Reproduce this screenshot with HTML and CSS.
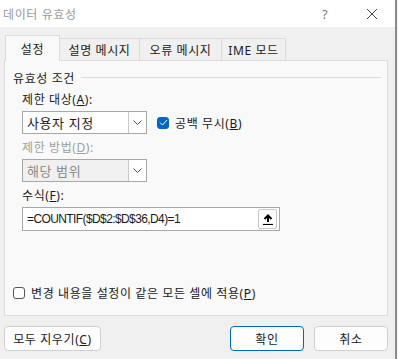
FILE: index.html
```html
<!DOCTYPE html>
<html lang="ko">
<head>
  <meta charset="UTF-8" />
  <title>데이터 유효성</title>
  <link rel="stylesheet" href="styles.css">
</head>
<body>

<div class="dialog">
  <div class="titlebar">
    <span class="title">데이터 유효성</span>
    <span class="help">?</span>
    <span class="close">
      <svg width="12" height="12" viewBox="0 0 12 12"><path d="M1 1 L11 11 M11 1 L1 11" stroke="#444" stroke-width="1" fill="none"/></svg>
    </span>
  </div>

  <div class="body">
    <div class="tabs">
      <div class="tab active">설정</div>
      <div class="tab">설명 메시지</div>
      <div class="tab">오류 메시지</div>
      <div class="tab">IME 모드</div>
    </div>

    <div class="panel">
      <div class="group-title"><span>유효성 조건</span><i class="rule"></i></div>

      <div class="field">
        <div class="label">제한 대상(<u>A</u>):</div>
        <div class="row">
          <div class="select">
            <span class="value">사용자 지정</span>
            <span class="arrow"><svg width="9" height="5" viewBox="0 0 9 5"><path d="M0.5 0.5 L4.5 4.5 L8.5 0.5" stroke="#555" fill="none"/></svg></span>
          </div>
          <label class="check">
            <span class="box checked"><svg width="9" height="7" viewBox="0 0 9 7"><path d="M1 3.5 L3.5 6 L8 1" stroke="#fff" stroke-width="1" fill="none"/></svg></span>
            <span>공백 무시(<u>B</u>)</span>
          </label>
        </div>
      </div>

      <div class="field">
        <div class="label disabled">제한 방법(<u>D</u>):</div>
        <div class="select off">
          <span class="value">해당 범위</span>
          <span class="arrow"><svg width="9" height="5" viewBox="0 0 9 5"><path d="M0.5 0.5 L4.5 4.5 L8.5 0.5" stroke="#555" fill="none"/></svg></span>
        </div>
      </div>

      <div class="field">
        <div class="label">수식(<u>F</u>):</div>
        <div class="formula">
          <span class="value">=COUNTIF($D$2:$D$36,D4)=1</span>
          <span class="pick"><svg width="10" height="11" viewBox="0 0 10 11"><path d="M5 1.5 L5 8 M1.5 5 L5 1.5 L8.5 5" stroke="#000" stroke-width="2" fill="none"/><path d="M0 10.5 H10" stroke="#000" stroke-width="1.2"/></svg></span>
        </div>
      </div>

      <label class="check apply">
        <span class="box"></span>
        <span>변경 내용을 설정이 같은 모든 셀에 적용(<u>P</u>)</span>
      </label>
    </div>

    <div class="buttons">
      <button class="btn wide">모두 지우기(<u>C</u>)</button>
      <div class="spacer"></div>
      <button class="btn primary">확인</button>
      <button class="btn">취소</button>
    </div>
  </div>
</div>

</body>
</html>
```

FILE: styles.css
```css
* {
  box-sizing: border-box;
}

body {
  margin: 0;
  width: 398px;
  height: 359px;
  overflow: hidden;
  font-family: "Noto Sans", "Noto Sans CJK KR", sans-serif;
  font-size: 12px;
  letter-spacing: 0.6px;
  color: #1a1a1a;
  background: #f0f0f0;
}

.dialog {
  width: 397px;
  height: 359px;
  border-right: 2px solid #8a8a8a;
  background: #f0f0f0;
  display: flex;
  flex-direction: column;
}

.titlebar {
  height: 27px;
  background: #fff;
  display: flex;
  align-items: center;
  padding: 0 0 0 3px;
}

.title {
  color: #999;
  font-size: 12px;
  flex: 1;
}

.help {
  color: #777;
  font-size: 13px;
  width: 48px;
  text-align: center;
}

.close {
  width: 46px;
  display: flex;
  justify-content: center;
}

.body {
  flex: 1;
  padding: 8px 7px 0 4px;
}

.tabs {
  display: flex;
  align-items: flex-end;
  height: 25px;
  padding-left: 1px;
  position: relative;
  z-index: 1;
}

.tab {
  height: 22px;
  padding: 0;
  border: 1px solid #dcdcdc;
  border-bottom: none;
  border-left: none;
  background: #f0f0f0;
  display: flex;
  align-items: center;
  justify-content: center;
  white-space: nowrap;
  font-size: 12px;
}

.tab.active {
  height: 26px;
  width: 55px;
  background: #f9f9f9;
  border-left: 1px solid #dcdcdc;
  margin-bottom: -1px;
}

.tab:nth-child(2) { width: 80px; }
.tab:nth-child(3) { width: 82px; }
.tab:nth-child(4) { width: 64px; }

.panel {
  height: 256px;
  background: #f9f9f9;
  border: 1px solid #dcdcdc;
  padding: 8px 6px 0 8px;
  display: flex;
  flex-direction: column;
}

.group-title {
  display: flex;
  align-items: center;
  gap: 6px;
  height: 17px;
}

.rule {
  flex: 1;
  border-top: 1px solid #dcdcdc;
}

.field {
  padding-left: 9px;
  margin-top: 5px;
}

.label {
  height: 17px;
  line-height: 17px;
  margin-bottom: 3px;
}

.label.disabled {
  color: #a0a0a0;
}

.row {
  display: flex;
  align-items: center;
  gap: 10px;
}

.select {
  width: 125px;
  height: 23px;
  border: 1px solid #a8a8a8;
  background: #fff;
  display: flex;
  align-items: center;
}

.select .value {
  flex: 1;
  padding-left: 4px;
  font-size: 13px;
}

.select .arrow {
  width: 18px;
  height: 21px;
  border-left: 1px solid #c8c8c8;
  display: flex;
  align-items: center;
  justify-content: center;
}

.select.off {
  background: #f0f0f0;
}

.select.off .value {
  color: #8a8a8a;
}

.select.off .arrow {
  background: #fff;
}

.check {
  display: flex;
  align-items: center;
  gap: 6px;
  white-space: nowrap;
}

.box {
  width: 12px;
  height: 12px;
  border: 1px solid #555;
  border-radius: 3px;
  background: #fff;
  display: flex;
  align-items: center;
  justify-content: center;
}

.box.checked {
  background: #0067c0;
  border-color: #0067c0;
}

.formula {
  width: 258px;
  height: 24px;
  border: 1px solid #a8a8a8;
  background: #fff;
  display: flex;
  align-items: center;
  padding: 0 2px 0 4px;
}

.formula .value {
  flex: 1;
  font-family: "Liberation Sans", sans-serif;
  font-size: 12px;
  letter-spacing: -0.6px;
}

.pick {
  width: 19px;
  height: 20px;
  border: 1px solid #c8c8c8;
  border-radius: 2px;
  background: #fdfdfd;
  display: flex;
  align-items: center;
  justify-content: center;
}

.apply {
  margin-top: auto;
  margin-bottom: 13px;
}

.buttons {
  display: flex;
  gap: 10px;
  margin-top: 10px;
}

.spacer {
  flex: 1;
}

.btn {
  height: 25px;
  width: 74px;
  border: 1px solid #d0d0d0;
  border-radius: 4px;
  background: #fdfdfd;
  font-family: inherit;
  font-size: 12px;
  letter-spacing: 0.6px;
  color: #1a1a1a;
  padding: 0;
}

.btn.wide {
  width: 97px;
}

.btn.primary {
  border-color: #0067c0;
}
```
